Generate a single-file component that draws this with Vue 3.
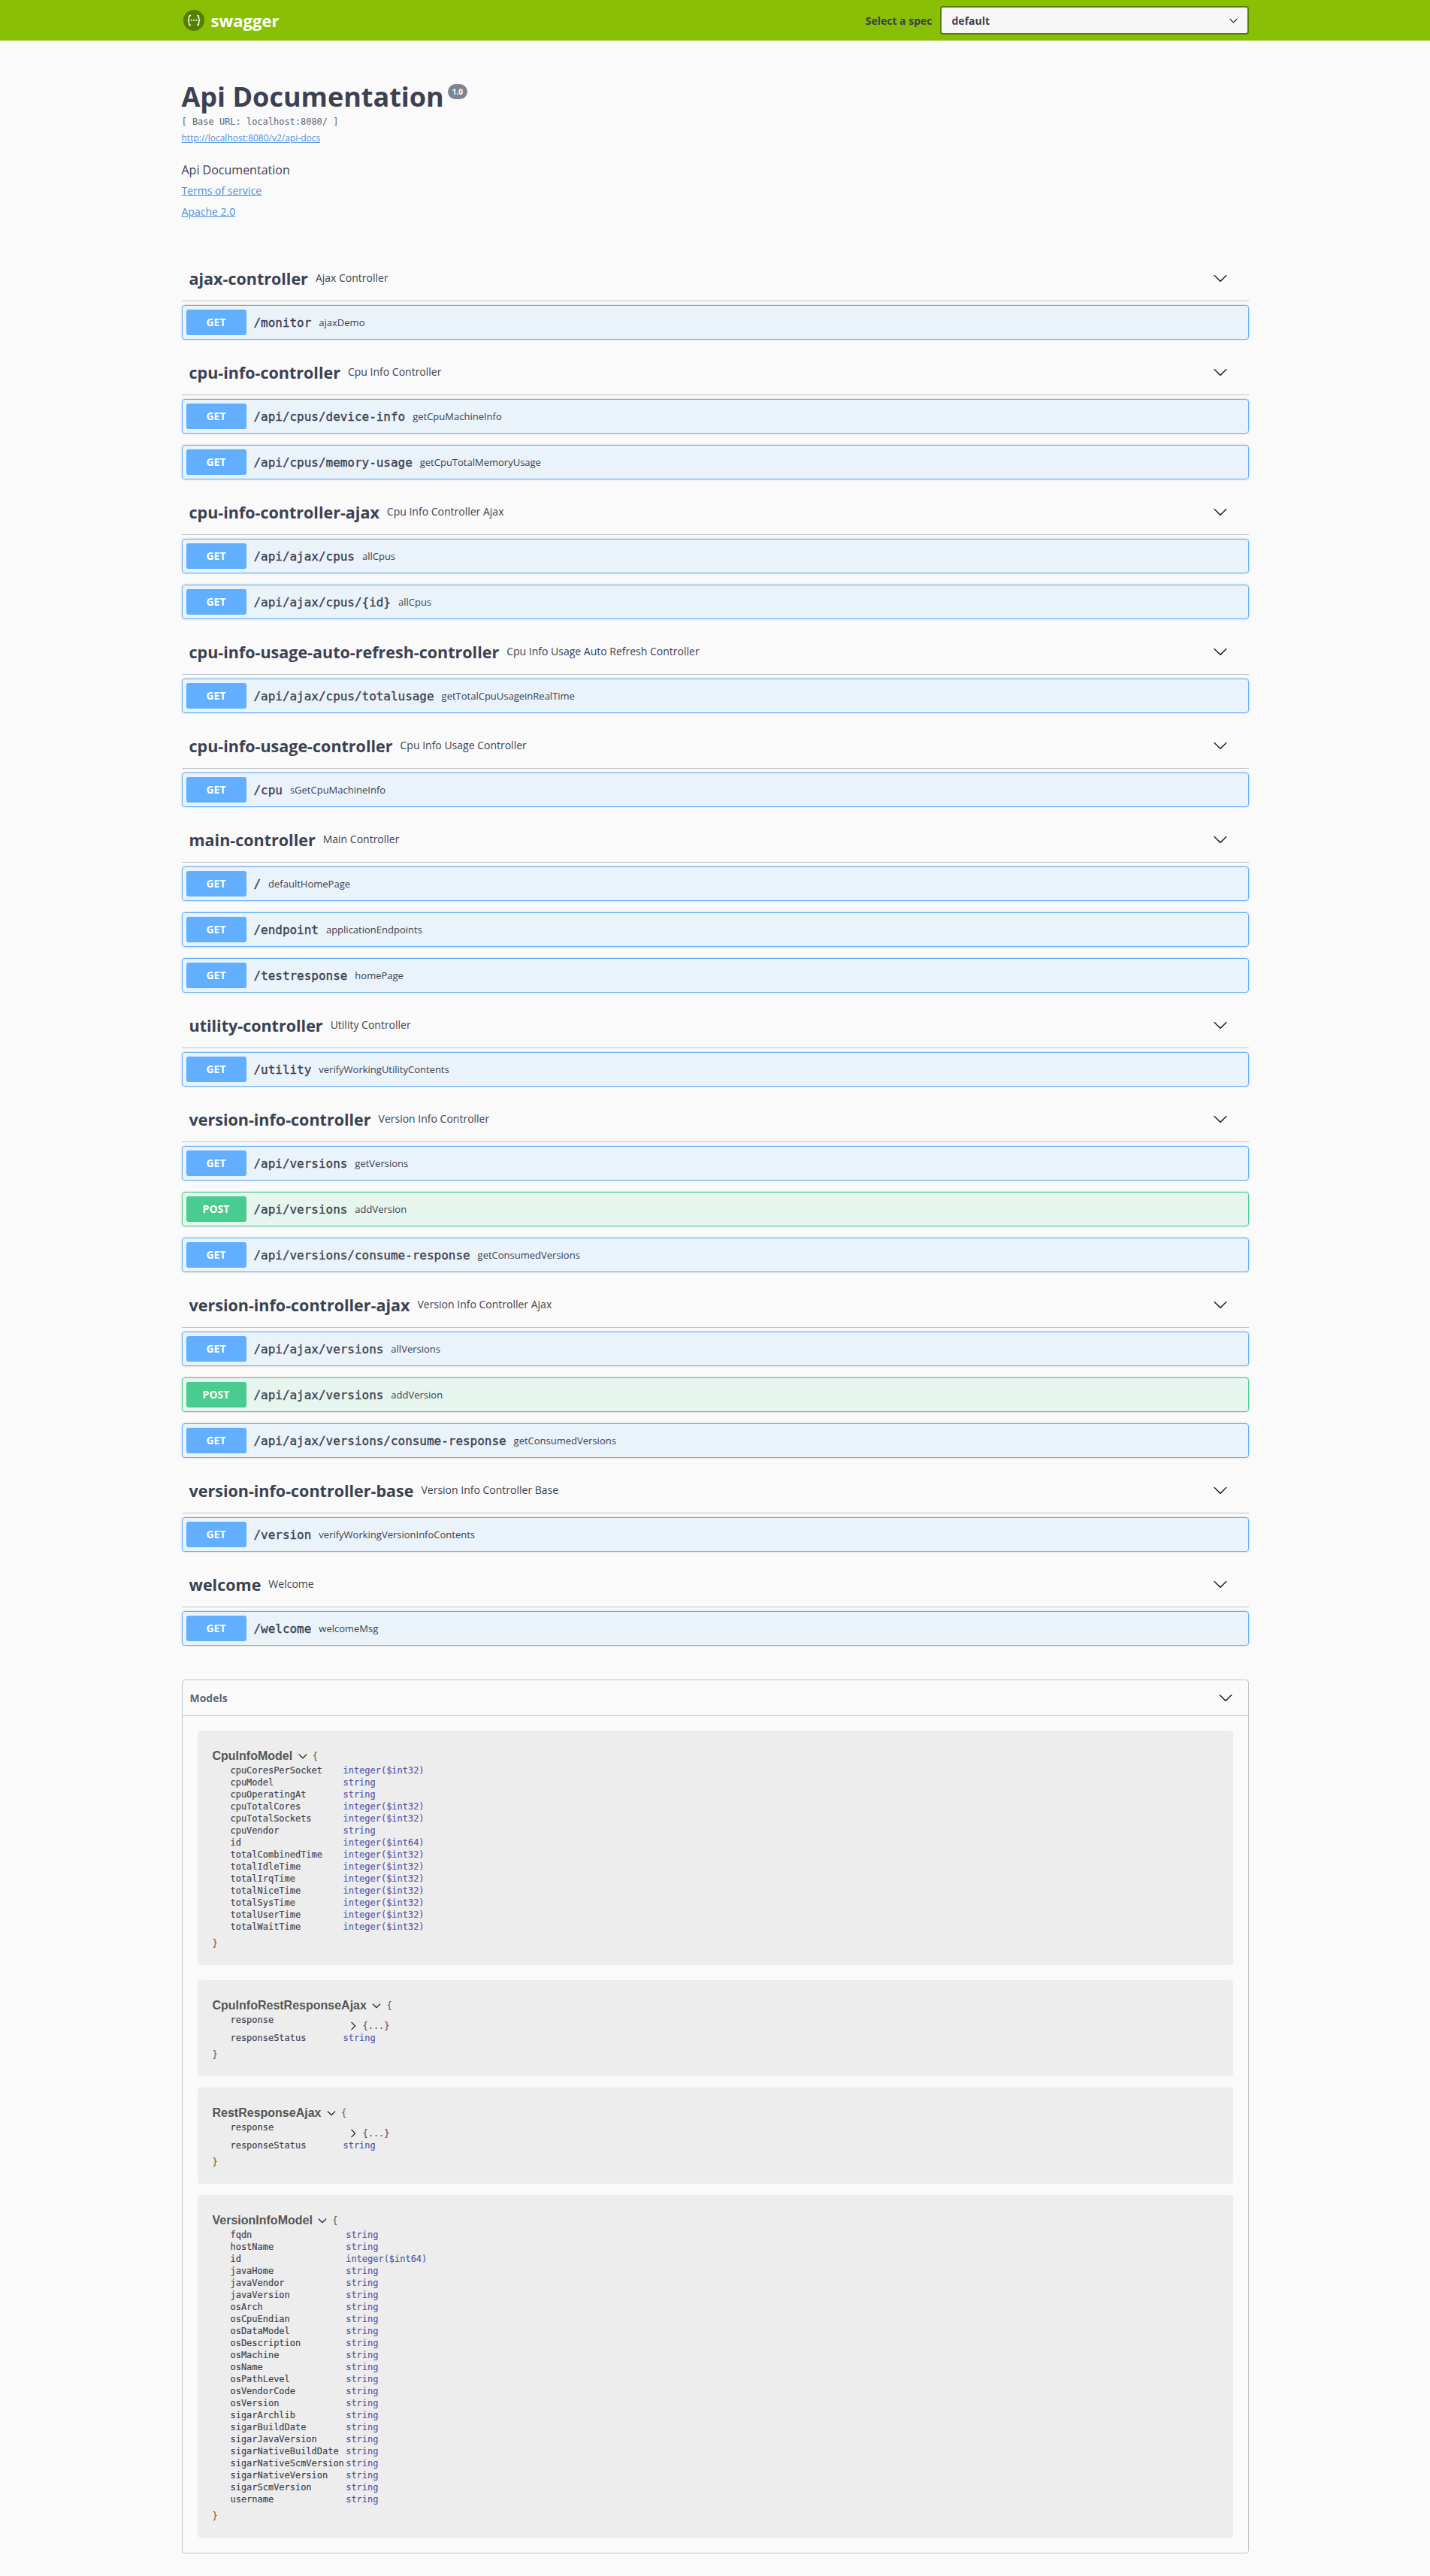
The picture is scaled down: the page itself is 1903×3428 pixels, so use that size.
<script setup>
const get = 'GET'
const post = 'POST'
const tags = [
  { name: 'ajax-controller', desc: 'Ajax Controller', ops: [[get, '/monitor', 'ajaxDemo']] },
  { name: 'cpu-info-controller', desc: 'Cpu Info Controller', ops: [[get, '/api/cpus/device-info', 'getCpuMachineInfo'], [get, '/api/cpus/memory-usage', 'getCpuTotalMemoryUsage']] },
  { name: 'cpu-info-controller-ajax', desc: 'Cpu Info Controller Ajax', ops: [[get, '/api/ajax/cpus', 'allCpus'], [get, '/api/ajax/cpus/{id}', 'allCpus']] },
  { name: 'cpu-info-usage-auto-refresh-controller', desc: 'Cpu Info Usage Auto Refresh Controller', ops: [[get, '/api/ajax/cpus/totalusage', 'getTotalCpuUsageinRealTime']] },
  { name: 'cpu-info-usage-controller', desc: 'Cpu Info Usage Controller', ops: [[get, '/cpu', 'sGetCpuMachineInfo']] },
  { name: 'main-controller', desc: 'Main Controller', ops: [[get, '/', 'defaultHomePage'], [get, '/endpoint', 'applicationEndpoints'], [get, '/testresponse', 'homePage']] },
  { name: 'utility-controller', desc: 'Utility Controller', ops: [[get, '/utility', 'verifyWorkingUtilityContents']] },
  { name: 'version-info-controller', desc: 'Version Info Controller', ops: [[get, '/api/versions', 'getVersions'], [post, '/api/versions', 'addVersion'], [get, '/api/versions/consume-response', 'getConsumedVersions']] },
  { name: 'version-info-controller-ajax', desc: 'Version Info Controller Ajax', ops: [[get, '/api/ajax/versions', 'allVersions'], [post, '/api/ajax/versions', 'addVersion'], [get, '/api/ajax/versions/consume-response', 'getConsumedVersions']] },
  { name: 'version-info-controller-base', desc: 'Version Info Controller Base', ops: [[get, '/version', 'verifyWorkingVersionInfoContents']] },
  { name: 'welcome', desc: 'Welcome', ops: [[get, '/welcome', 'welcomeMsg']] },
]
const i32 = 'integer($int32)'
const i64 = 'integer($int64)'
const s = 'string'
const models = [
  { name: 'CpuInfoModel', rows: [['cpuCoresPerSocket', i32], ['cpuModel', s], ['cpuOperatingAt', s], ['cpuTotalCores', i32], ['cpuTotalSockets', i32], ['cpuVendor', s], ['id', i64], ['totalCombinedTime', i32], ['totalIdleTime', i32], ['totalIrqTime', i32], ['totalNiceTime', i32], ['totalSysTime', i32], ['totalUserTime', i32], ['totalWaitTime', i32]] },
  { name: 'CpuInfoRestResponseAjax', rows: [['response', null], ['responseStatus', s]] },
  { name: 'RestResponseAjax', rows: [['response', null], ['responseStatus', s]] },
  { name: 'VersionInfoModel', rows: [['fqdn', s], ['hostName', s], ['id', i64], ['javaHome', s], ['javaVendor', s], ['javaVersion', s], ['osArch', s], ['osCpuEndian', s], ['osDataModel', s], ['osDescription', s], ['osMachine', s], ['osName', s], ['osPathLevel', s], ['osVendorCode', s], ['osVersion', s], ['sigarArchlib', s], ['sigarBuildDate', s], ['sigarJavaVersion', s], ['sigarNativeBuildDate', s], ['sigarNativeScmVersion', s], ['sigarNativeVersion', s], ['sigarScmVersion', s], ['username', s]] },
]
const arrowDown = 'M17.418 6.109c.272-.268.709-.268.979 0s.271.701 0 .969l-7.908 7.83c-.27.268-.707.268-.979 0l-7.908-7.83c-.27-.268-.27-.701 0-.969.271-.268.709-.268.979 0L10 13.25l7.418-7.141z'
const arrowRight = 'M13.25 10L6.109 2.58c-.268-.27-.268-.707 0-.979.268-.27.701-.27.969 0l7.83 7.908c.268.271.268.709 0 .979l-7.83 7.908c-.268.271-.701.27-.969 0-.268-.269-.268-.707 0-.979L13.25 10z'
</script>

<template>
  <div class="page">
    <header class="topbar">
      <div class="wrapper bar">
        <div class="brand">
          <svg class="logo" viewBox="0 0 28 28" aria-hidden="true">
            <circle cx="14" cy="14" r="14" fill="#547f00" />
            <path d="M10 7.5c-2 0-2.6 1-2.6 2.6v1.8c0 1.2-.5 2-1.6 2.1 1.1.1 1.6.9 1.6 2.1v1.8c0 1.6.6 2.6 2.6 2.6M18 7.5c2 0 2.6 1 2.6 2.6v1.8c0 1.2.5 2 1.6 2.1-1.1.1-1.6.9-1.6 2.1v1.8c0 1.6-.6 2.6-2.6 2.6" fill="none" stroke="#fff" stroke-width="1.5" />
            <circle cx="10.6" cy="14" r="1" fill="#fff" /><circle cx="14" cy="14" r="1" fill="#fff" /><circle cx="17.4" cy="14" r="1" fill="#fff" />
          </svg>
          <span class="brand-name">swagger</span>
        </div>
        <div class="spec">
          <span class="spec-label">Select a spec</span>
          <div class="spec-select">
            <span>default</span>
            <svg class="spec-arrow" viewBox="0 0 20 20" aria-hidden="true"><path :d="arrowDown" /></svg>
          </div>
        </div>
      </div>
    </header>

    <main class="wrapper">
      <section class="info">
        <h1 class="title">Api Documentation<span class="version">1.0</span></h1>
        <div class="base-url">[ Base URL: localhost:8080/ ]</div>
        <a class="link spec-link">http://localhost:8080/v2/api-docs</a>
        <p class="desc">Api Documentation</p>
        <a class="link info-link first">Terms of service</a>
        <a class="link info-link">Apache 2.0</a>
      </section>

      <section v-for="tag in tags" :key="tag.name" class="tag-section">
        <div class="tag">
          <h2 class="tag-name">{{ tag.name }}</h2>
          <span class="tag-desc">{{ tag.desc }}</span>
          <svg class="tag-arrow" viewBox="0 0 20 20" aria-hidden="true"><path :d="arrowDown" /></svg>
        </div>
        <div v-for="op in tag.ops" :key="op[0] + op[1]" class="op" :class="op[0] === 'GET' ? 'op-get' : 'op-post'">
          <span class="method">{{ op[0] }}</span>
          <span class="path">{{ op[1] }}</span>
          <span class="op-desc">{{ op[2] }}</span>
        </div>
      </section>

      <section class="models">
        <div class="models-head">
          <h4>Models</h4>
          <svg class="models-arrow" viewBox="0 0 20 20" aria-hidden="true"><path :d="arrowDown" /></svg>
        </div>
        <div class="models-body">
          <div v-for="m in models" :key="m.name" class="model">
            <div class="model-title">
              <span class="model-name">{{ m.name }}</span>
              <svg class="model-arrow" viewBox="0 0 20 20" aria-hidden="true"><path :d="arrowDown" /></svg>
              <span class="brace">{</span>
            </div>
            <table class="props">
              <tbody>
                <tr v-for="r in m.rows" :key="r[0]">
                  <td class="prop-name">{{ r[0] }}</td>
                  <td v-if="r[1]" class="prop-type">{{ r[1] }}</td>
                  <td v-else class="prop-obj">
                    <svg class="obj-arrow" viewBox="0 0 20 20" aria-hidden="true"><path :d="arrowRight" /></svg>
                    <span class="brace">{...}</span>
                  </td>
                </tr>
              </tbody>
            </table>
            <div class="brace close">}</div>
          </div>
        </div>
      </section>
    </main>
  </div>
</template>

<style>
html, body { margin: 0; background: #fafafa; }
</style>

<style scoped>
.page {
  font-family: "Open Sans", "Noto Sans", sans-serif;
  color: #3b4151;
  background: #fafafa;
}
.wrapper {
  box-sizing: border-box;
  max-width: 1460px;
  margin: 0 auto;
  padding: 0 20px;
}
.topbar {
  background: #89bf04;
  height: 54px;
}
.bar {
  height: 54px;
  display: flex;
  align-items: center;
  justify-content: space-between;
}
.brand {
  display: flex;
  align-items: center;
  gap: 9px;
  padding-left: 2px;
}
.logo { width: 28px; height: 28px; display: block; }
.brand-name {
  color: #fff;
  font-size: 22px;
  font-weight: 700;
  line-height: 28px;
}
.spec { display: flex; align-items: center; gap: 10px; }
.spec-label {
  font-size: 14px;
  font-weight: 700;
  color: #3b4151;
}
.spec-select {
  box-sizing: border-box;
  width: 411px;
  height: 38px;
  border: 2px solid #547f00;
  border-radius: 4px;
  background: #f7f7f7;
  display: flex;
  align-items: center;
  justify-content: space-between;
  padding: 0 13px 0 14px;
  font-size: 14px;
  font-weight: 700;
}
.spec-arrow { width: 11px; height: 11px; fill: #222; stroke: #222; stroke-width: 1; }

.info { padding-top: 50px; margin-bottom: 50px; }
.title {
  margin: 0;
  font-size: 36px;
  line-height: 50px;
  font-weight: 700;
  display: flex;
  align-items: flex-start;
}
.version {
  margin: 8px 0 0 5px;
  width: 26px;
  height: 20px;
  border-radius: 10px;
  background: #7d8492;
  color: #fff;
  font-size: 10px;
  line-height: 20px;
  font-weight: 700;
  text-align: center;
}
.base-url {
  font-family: "DejaVu Sans Mono", monospace;
  font-size: 12px;
  line-height: 16px;
  letter-spacing: -0.02px;
  color: #5f6572;
}
.link { display: block; color: #4990e2; text-decoration: underline; width: max-content; }
.spec-link { font-size: 12px; line-height: 16px; margin-top: 6px; }
.desc { margin: 24px 0 0; font-size: 16px; line-height: 20px; }
.info-link { font-size: 14px; line-height: 20px; margin-top: 8px; }

.tag-section { display: flow-root; }
.tag {
  box-sizing: border-box;
  height: 59px;
  margin-bottom: 5px;
  padding: 0 28px 0 10px;
  border-bottom: 1px solid rgba(59, 65, 81, 0.3);
  display: flex;
  align-items: center;
}
.tag-name {
  margin: 0;
  font-size: 21.5px;
  font-weight: 700;
  line-height: 32px;
}
.tag-desc {
  flex: 1;
  padding-left: 10px;
  font-size: 14px;
  line-height: 20px;
  margin-top: -2px;
}
.tag-arrow { width: 20px; height: 20px; fill: #222; margin-top: -3px; }

.op {
  box-sizing: border-box;
  height: 46px;
  margin-bottom: 15px;
  padding: 5px;
  border: 1px solid;
  border-radius: 4px;
  box-shadow: 0 0 3px rgba(0, 0, 0, 0.19);
  display: flex;
  align-items: center;
}
.op-get { border-color: #61affe; background: rgba(97, 175, 254, 0.1); }
.op-post { border-color: #49cc90; background: rgba(73, 204, 144, 0.1); }
.method {
  width: 80px;
  height: 34px;
  border-radius: 3px;
  color: #fff;
  font-size: 14px;
  font-weight: 700;
  line-height: 34px;
  text-align: center;
}
.op-get .method { background: #61affe; }
.op-post .method { background: #49cc90; }
.path {
  padding: 0 10px;
  font-family: "DejaVu Sans Mono", monospace;
  font-size: 16px;
  letter-spacing: -0.03px;
  -webkit-text-stroke: 0.35px #3b4151;
}
.op-desc { font-size: 13px; }

.models {
  margin: 30px 0;
  border: 1px solid rgba(59, 65, 81, 0.3);
  border-radius: 4px;
}
.models-head {
  height: 47px;
  box-sizing: border-box;
  padding: 0 20px 0 10px;
  border-bottom: 1px solid rgba(59, 65, 81, 0.3);
  display: flex;
  align-items: center;
  justify-content: space-between;
}
.models-head h4 {
  margin: 0;
  font-size: 14px;
  font-weight: 700;
  color: #606671;
}
.models-arrow { width: 20px; height: 20px; fill: #222; }
.models-body { padding: 20px 20px 5px; }
.model {
  padding: 20px 20px 21px;
  margin-bottom: 15px;
  border-radius: 4px;
  background: rgba(0, 0, 0, 0.05);
}
.model:first-child { margin-bottom: 20px; }
.model-title {
  height: 25px;
  display: flex;
  align-items: center;
  padding-top: 3px;
  box-sizing: border-box;
}
.model-name {
  font-family: "Liberation Sans", sans-serif;
  font-size: 16px;
  font-weight: 700;
  color: #555;
  line-height: 22px;
}
.model-arrow { width: 12px; height: 12px; margin-left: 7.5px; fill: #222; stroke: #222; stroke-width: 1; }
.brace {
  font-family: "DejaVu Sans Mono", monospace;
  font-size: 12px;
  line-height: 16px;
  color: #555;
}
.model-title .brace { margin-left: 7px; }
.close { margin-top: 6px; }
.props {
  border-collapse: collapse;
  font-family: "DejaVu Sans Mono", monospace;
  font-size: 12px;
  line-height: 16px;
  letter-spacing: -0.02px;
  -webkit-text-stroke: 0.15px;
}
.props td { padding: 0; vertical-align: top; }
.prop-name {
  box-sizing: border-box;
  padding: 0 2.4px 0 24px !important;
  min-width: 174px;
  color: #3b4151;
}
.prop-type { color: #55a; }
.prop-obj { display: flex; align-items: center; padding-top: 8px !important; padding-left: 7.5px !important; }
.obj-arrow { width: 12px; height: 12px; fill: #222; stroke: #222; stroke-width: 1; margin-right: 6.5px; }
</style>
